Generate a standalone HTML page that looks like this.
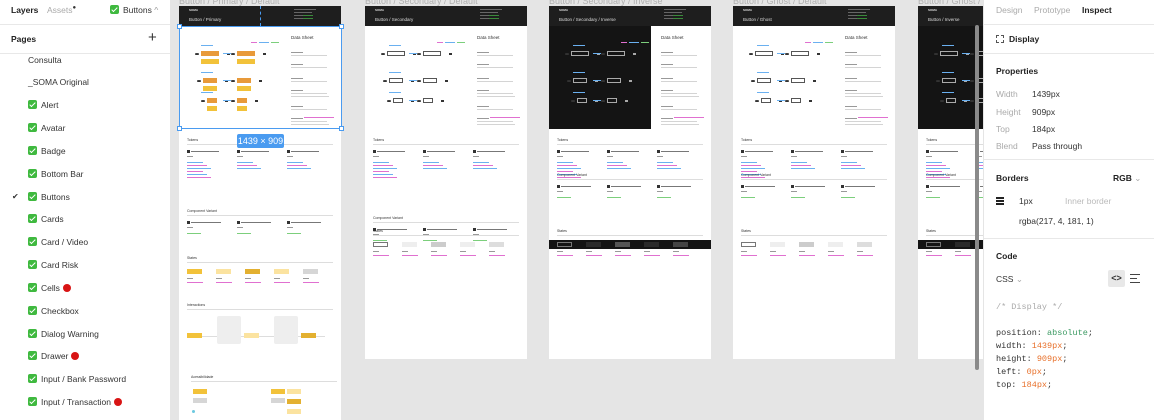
<!DOCTYPE html>
<html><head><meta charset="utf-8"><style>
*{margin:0;padding:0;box-sizing:border-box}
html,body{width:1154px;height:420px;overflow:hidden}
body{background:#e5e5e5;font-family:"Liberation Sans",sans-serif;position:relative}
.a{position:absolute}
#left{left:0;top:0;width:171px;height:420px;background:#fff;border-right:1px solid #e5e5e5}
#right{left:983px;top:0;width:171px;height:420px;background:#fff;border-left:1px solid #e5e5e5}
.t{position:absolute;font-size:8.5px;color:#333;white-space:nowrap}
.hr{position:absolute;left:0;right:0;height:1px;background:#e8e8e8}
.cb{display:inline-block;width:9px;height:9px;background:#3fb93f;border-radius:2px;vertical-align:-1px;margin-right:4px;position:relative}
.cb:after{content:"";position:absolute;left:3px;top:1px;width:2px;height:5px;border:solid #fff;border-width:0 1.3px 1.3px 0;transform:rotate(45deg)}
.rd{display:inline-block;width:8px;height:8px;border-radius:50%;background:#d81414;vertical-align:-1px;margin-left:3px}
.fr{position:absolute;background:#fff}
.ft{position:absolute;font-size:9px;color:#b0b0b0;white-space:nowrap;top:-4px}
.b{position:absolute}
.mono{font-family:"Liberation Mono",monospace;font-size:8.5px}
</style></head><body>
<div class="ft" style="left:179px">Button / Primary / Default</div>
<div class="ft" style="left:365px">Button / Secondary / Default</div>
<div class="ft" style="left:549px">Button / Secondary / Inverse</div>
<div class="ft" style="left:733px">Button / Ghost / Default</div>
<div class="ft" style="left:918px">Button / Ghost / Inverse</div>

<div class="fr" id="f1" style="left:179px;top:6px;width:162px;height:414px"></div>
<div class="fr" id="f2" style="left:365px;top:6px;width:162px;height:353px"></div>
<div class="fr" id="f3" style="left:549px;top:6px;width:162px;height:353px"></div>
<div class="fr" id="f4" style="left:733px;top:6px;width:162px;height:353px"></div>
<div class="fr" id="f5" style="left:918px;top:6px;width:65px;height:353px;overflow:hidden"></div>

<div class="a" style="left:179px;top:26px;width:163px;height:103px;border:1px solid #4a9bf0"></div>
<div class="a" style="left:177px;top:24px;width:5px;height:5px;background:#fff;border:1px solid #4a9bf0"></div>
<div class="a" style="left:339px;top:24px;width:5px;height:5px;background:#fff;border:1px solid #4a9bf0"></div>
<div class="a" style="left:177px;top:126px;width:5px;height:5px;background:#fff;border:1px solid #4a9bf0"></div>
<div class="a" style="left:339px;top:126px;width:5px;height:5px;background:#fff;border:1px solid #4a9bf0"></div>
<div class="a" style="left:260px;top:6px;width:0;height:20px;border-left:1px dashed #4a9bf0"></div>
<div class="a" style="left:237px;top:134px;width:47px;height:14px;background:#4a9bf0;border-radius:2px;color:#fff;font-size:9px;line-height:14px;text-align:center;white-space:nowrap">1439 × 909</div>

<div class="a" style="left:975px;top:25px;width:4px;height:345px;background:#8a8a8a;border-radius:2px"></div>

<div class="a" id="left">
 <div class="t" style="left:11px;top:5px;font-weight:bold;color:#222">Layers</div>
 <div class="t" style="left:47px;top:5px;color:#aaa">Assets<sup style="font-size:6px;color:#333">●</sup></div>
 <div class="t" style="left:110px;top:5px"><span class="cb"></span>Buttons <span style="color:#999">^</span></div>
 <div class="hr" style="top:24px"></div>
 <div class="t" style="left:11px;top:34px;font-weight:bold;color:#222">Pages</div>
 <div class="t" style="left:148px;top:29px;font-size:15px;color:#333">+</div>
 <div class="hr" style="top:53px"></div>
 <div class="t" style="left:28px;top:55px">Consulta</div>
 <div class="t" style="left:28px;top:77px">_SOMA Original</div>
 <div class="t" style="left:28px;top:100px"><span class="cb"></span>Alert</div>
 <div class="t" style="left:28px;top:123px"><span class="cb"></span>Avatar</div>
 <div class="t" style="left:28px;top:146px"><span class="cb"></span>Badge</div>
 <div class="t" style="left:28px;top:169px"><span class="cb"></span>Bottom Bar</div>
 <div class="t" style="left:12px;top:192px;font-size:8px">✔</div>
 <div class="t" style="left:28px;top:192px"><span class="cb"></span>Buttons</div>
 <div class="t" style="left:28px;top:214px"><span class="cb"></span>Cards</div>
 <div class="t" style="left:28px;top:237px"><span class="cb"></span>Card / Video</div>
 <div class="t" style="left:28px;top:260px"><span class="cb"></span>Card Risk</div>
 <div class="t" style="left:28px;top:283px"><span class="cb"></span>Cells<span class="rd"></span></div>
 <div class="t" style="left:28px;top:306px"><span class="cb"></span>Checkbox</div>
 <div class="t" style="left:28px;top:329px"><span class="cb"></span>Dialog Warning</div>
 <div class="t" style="left:28px;top:351px"><span class="cb"></span>Drawer<span class="rd"></span></div>
 <div class="t" style="left:28px;top:374px"><span class="cb"></span>Input / Bank Password</div>
 <div class="t" style="left:28px;top:397px"><span class="cb"></span>Input / Transaction<span class="rd"></span></div>
</div>

<div class="a" id="right">
 <div class="t" style="left:12px;top:5px;color:#aaa">Design</div>
 <div class="t" style="left:50px;top:5px;color:#aaa">Prototype</div>
 <div class="t" style="left:98px;top:5px;font-weight:bold;color:#222">Inspect</div>
 <div class="hr" style="top:24px"></div>
 <div class="a" style="left:12px;top:35px;width:8px;height:8px;border:1px dashed #555"></div>
 <div class="t" style="left:25px;top:34px;font-weight:bold;color:#222">Display</div>
 <div class="hr" style="top:53px"></div>
 <div class="t" style="left:12px;top:66px;font-weight:bold;color:#222">Properties</div>
 <div class="t" style="left:12px;top:89px;color:#aaa">Width</div><div class="t" style="left:48px;top:89px">1439px</div>
 <div class="t" style="left:12px;top:107px;color:#aaa">Height</div><div class="t" style="left:48px;top:107px">909px</div>
 <div class="t" style="left:12px;top:124px;color:#aaa">Top</div><div class="t" style="left:48px;top:124px">184px</div>
 <div class="t" style="left:12px;top:141px;color:#aaa">Blend</div><div class="t" style="left:48px;top:141px">Pass through</div>
 <div class="hr" style="top:159px"></div>
 <div class="t" style="left:12px;top:173px;font-weight:bold;color:#222">Borders</div>
 <div class="t" style="left:129px;top:173px;font-weight:bold;color:#222">RGB <span style="color:#aaa;font-weight:normal">⌄</span></div>
 <div class="a" style="left:12px;top:197px;width:8px;height:2px;background:#222"></div>
 <div class="a" style="left:12px;top:200px;width:8px;height:2px;background:#222"></div>
 <div class="a" style="left:12px;top:203px;width:8px;height:2px;background:#222"></div>
 <div class="t" style="left:35px;top:196px">1px</div>
 <div class="t" style="left:81px;top:196px;color:#bbb">Inner border</div>
 <div class="t" style="left:35px;top:216px">rgba(217, 4, 181, 1)</div>
 <div class="hr" style="top:238px"></div>
 <div class="t" style="left:12px;top:251px;font-weight:bold;color:#222">Code</div>
 <div class="t" style="left:12px;top:274px">CSS <span style="color:#aaa">⌄</span></div>
 <div class="a" style="left:124px;top:270px;width:17px;height:17px;background:#e8e8e8;border-radius:2px;font-size:9px;text-align:center;line-height:17px;font-weight:bold;color:#333">&lt;&gt;</div>
 <div class="a" style="left:146px;top:274px;width:10px;height:1px;background:#444"></div>
 <div class="a" style="left:146px;top:278px;width:7px;height:1px;background:#444"></div>
 <div class="a" style="left:146px;top:282px;width:10px;height:1px;background:#444"></div>
 <div class="t mono" style="left:12px;top:302px;color:#aaa">/* Display */</div>
 <div class="t mono" style="left:12px;top:328px">position: <span style="color:#3c9a63">absolute</span>;</div>
 <div class="t mono" style="left:12px;top:341px">width: <span style="color:#e8702a">1439px</span>;</div>
 <div class="t mono" style="left:12px;top:354px">height: <span style="color:#e8702a">909px</span>;</div>
 <div class="t mono" style="left:12px;top:367px">left: <span style="color:#e8702a">0px</span>;</div>
 <div class="t mono" style="left:12px;top:380px">top: <span style="color:#e8702a">184px</span>;</div>
</div>

<script>
function R(p,x,y,w,h,c,ex){var d=document.createElement('div');d.className='b';d.style.cssText='left:'+x+'px;top:'+y+'px;width:'+w+'px;height:'+h+'px;background:'+c+';'+(ex||'');p.appendChild(d);return d;}
function T(p,x,y,s,txt,c,fw){var d=document.createElement('div');d.className='b';d.style.cssText='left:'+x+'px;top:'+y+'px;font-size:'+s+'px;color:'+c+';white-space:nowrap;font-weight:'+(fw||'normal');d.textContent=txt;p.appendChild(d);}
var names=['Button / Primary','Button / Secondary','Button / Secondary / Inverse','Button / Ghost','Button / Inverse'];
for(var i=1;i<=5;i++){
 var f=document.getElementById('f'+i);
 var dark=(i==3||i==5);
 R(f,0,0,162,20,'#1e1e1e');
 T(f,10,2,3,'SOMA','#ddd','bold');
 T(f,10,11,4.5,names[i-1],'#ddd');
 R(f,115,3,22,1,'#666');R(f,115,6,18,1,'#666');R(f,115,9,18,1,'#666');R(f,115,12,18,1,'#666');
 R(f,124,9,10,1,'#3a8a3a');R(f,124,12,10,1,'#3a8a3a');
 if(dark){R(f,0,20,102,103,'#141414');}
 T(f,112,29,4.5,'Data Sheet','#333');
 var ys=[40,52,66,78,94,106];
 for(var k=0;k<6;k++){R(f,112,ys[k]+6,12,1,'#999');R(f,112,ys[k]+9,36,1,'#d4d4d4');if(k==3||k==5)R(f,112,ys[k]+12,38,1,'#d4d4d4');}
 R(f,125,111,30,1,'#e070d0');
 for(var r=0;r<3;r++){
  var y=[45,72,92][r];
  for(var cI=0;cI<2;cI++){
   var x=cI?58:[22,24,28][r];
   var w=[18,14,10][r];
   if(i==1){R(f,x,y,w,5,'#e89a3a');R(f,x,y+8,w,5,'#f2c23a');}
   else{R(f,x,y,w,5,dark?'#141414':'#fff','border:0.7px solid '+(dark?'#aaa':'#555'));}
   R(f,x-6,y+2,4,1.5,'#333','border-radius:50%');
   R(f,x+w+8,y+2,3,2,dark?'#aaa':'#333');
  }
  R(f,(i==1?22:24),y-6,12,1,'#6ab0f0');R(f,44,y+2,8,1,'#6ab0f0');
 }
 R(f,72,36,6,1,'#e070d0');R(f,80,36,10,1,'#6ab0f0');R(f,92,36,8,1,'#7ccf7c');
 T(f,8,132,3.5,'Tokens','#333');R(f,8,138,146,0.5,'#ddd');
 for(var c=0;c<3;c++){var x=8+c*50;R(f,x,144,2.5,2.5,'#333');R(f,x+4,144.5,28,1,'#777');R(f,x,150,6,1,'#999');
  for(var q=0;q<(c==0?6:3);q++)R(f,x,156+q*3,16+(q%3)*4,1,q%2?'#e070d0':'#6ab0f0');}
 var cy=(i==1?203:(i==2?210:167));
 T(f,8,cy,3.5,'Component Variant','#333');R(f,8,cy+6,146,0.5,'#ddd');
 for(var c=0;c<3;c++){var x=8+c*50;R(f,x,cy+12,2.5,2.5,'#333');R(f,x+4,cy+12.5,30,1,'#777');R(f,x,cy+18,6,1,'#999');R(f,x,cy+24,14,1,'#7ccf7c');}
 var sy=(i==1?250:223);
 T(f,8,sy,3.5,'States','#333');R(f,8,sy+6,146,0.5,'#ddd');
 if(dark)R(f,0,sy+11,162,9,'#141414');
 for(var c=0;c<5;c++){var x=8+c*29;var col;
  if(i==1)col=['#f2c23a','#fbe3a0','#e3b030','#fbe3a0','#d6d6d6'][c];
  else if(dark)col=['#141414','#2a2a2a','#555','#2a2a2a','#444'][c];
  else col=['#fff','#eee','#ccc','#eee','#ddd'][c];
  R(f,x,sy+13,15,5,col,c==0&&i!=1?'border:0.7px solid #777':'');
  R(f,x,sy+22,6,1,'#999');R(f,x,sy+26,16,1,'#e070d0');}
}
var f=document.getElementById('f1');
T(f,8,297,3.5,'Interactions','#333');R(f,8,303,146,0.5,'#ddd');
R(f,23,330,123,0.5,'#ddd');
R(f,8,327,15,5,'#f2c23a');R(f,65,327,15,5,'#fbe3a0');R(f,122,327,15,5,'#e3b030');
R(f,38,310,24,28,'#eee','border-radius:2px');R(f,95,310,24,28,'#eee','border-radius:2px');
T(f,12,369,3.5,'Acessibilidade','#333');R(f,12,375,146,0.5,'#ddd');
R(f,14,383,14,5,'#f2c23a');R(f,14,392,14,5,'#d6d6d6');R(f,92,383,14,5,'#f2c23a');R(f,92,392,14,5,'#d6d6d6');R(f,108,383,14,5,'#fbe3a0');R(f,108,393,14,5,'#e3b030');R(f,108,403,14,5,'#fbe3a0');
R(f,13,404,3,3,'#6cc9e0','border-radius:50%');
</script>
</body></html>
